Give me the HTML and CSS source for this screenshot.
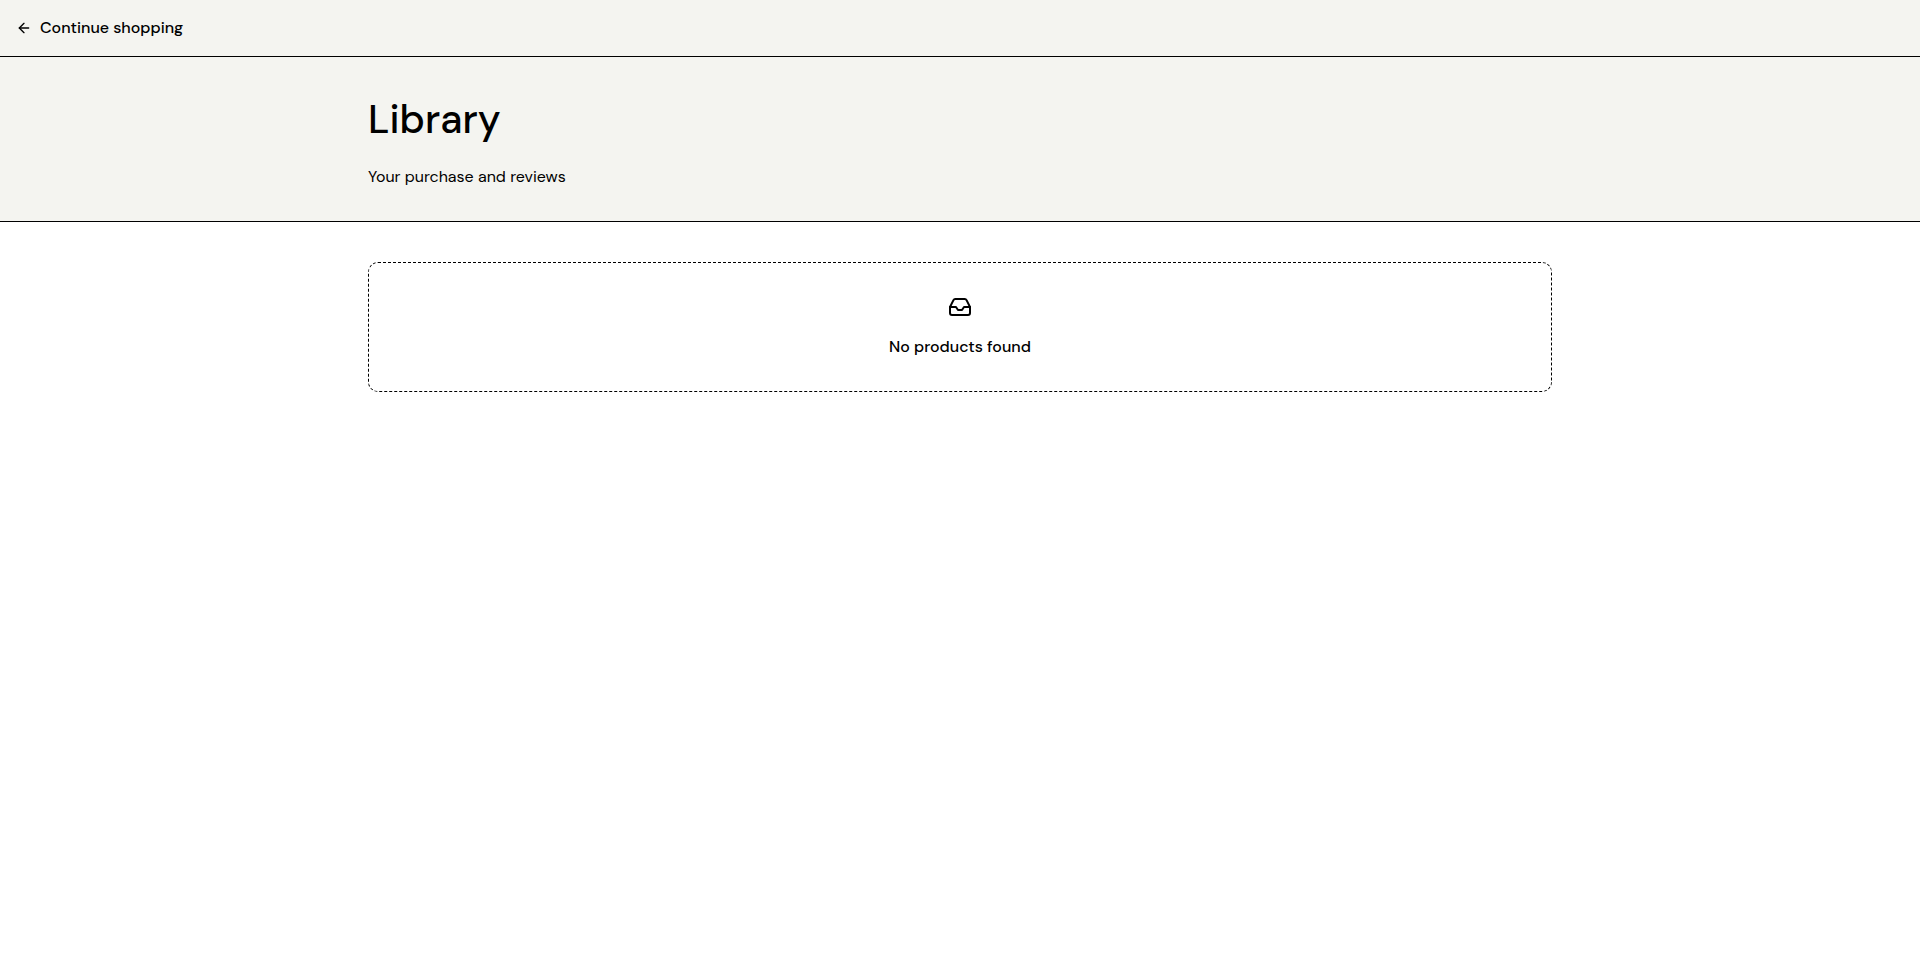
FILE: index.html
```html
<!DOCTYPE html>
<html lang="en">
<head>
<meta charset="utf-8">
<meta name="viewport" content="width=device-width, initial-scale=1">
<title>Library</title>
<link rel="stylesheet" href="styles.css">
</head>
<body>
<nav class="topbar">
  <a class="back-link" href="/">
    <svg class="back-icon" viewBox="0 0 24 24" fill="none" stroke="currentColor" stroke-width="2" stroke-linecap="round" stroke-linejoin="round" aria-hidden="true"><path d="m12 19-7-7 7-7"/><path d="M19 12H5"/></svg>
    <span>Continue shopping</span>
  </a>
</nav>
<header class="hero">
  <div class="container hero-inner">
    <h1 class="title">Library</h1>
    <p class="subtitle">Your purchase and reviews</p>
  </div>
</header>
<main class="container content">
  <section class="empty">
    <svg class="empty-icon" viewBox="0 0 24 24" fill="none" stroke="currentColor" stroke-width="2" stroke-linecap="round" stroke-linejoin="round" aria-hidden="true"><path d="M22 12h-6l-2 3h-4l-2-3H2"/><path d="M5.45 5.11 2 12v6a2 2 0 0 0 2 2h16a2 2 0 0 0 2-2v-6l-3.45-6.89A2 2 0 0 0 16.76 4H7.24a2 2 0 0 0-1.79 1.11z"/></svg>
    <p class="empty-text">No products found</p>
  </section>
</main>
</body>
</html>
```
FILE: styles.css
```css
* {
  box-sizing: border-box;
  margin: 0;
}

body {
  background: #fff;
  color: #000;
  font: 400 16px/24px "DM Sans", Lato, sans-serif;
}

.topbar {
  display: flex;
  padding: 16px;
  background: #f4f4f0;
  border-bottom: 1px solid #000;
}

.back-link {
  display: flex;
  align-items: center;
  gap: 8px;
  color: inherit;
  font-weight: 500;
  text-decoration: none;
}

.back-icon {
  width: 16px;
  height: 16px;
}

.container {
  max-width: 1280px;
  margin: 0 auto;
  padding: 32px 48px;
}

.hero {
  background: #f4f4f0;
  border-bottom: 1px solid #000;
}

.hero-inner {
  display: flex;
  flex-direction: column;
  gap: 16px;
}

.title {
  font-size: 40px;
  font-weight: 500;
  line-height: 60px;
}

.content {
  padding-top: 40px;
}

.empty {
  display: flex;
  flex-direction: column;
  align-items: center;
  gap: 16px;
  padding: 32px;
  border: 1px dashed #000;
  border-radius: 10px;
}

.empty-icon {
  width: 24px;
  height: 24px;
}

.empty-text {
  font-weight: 500;
}
```
